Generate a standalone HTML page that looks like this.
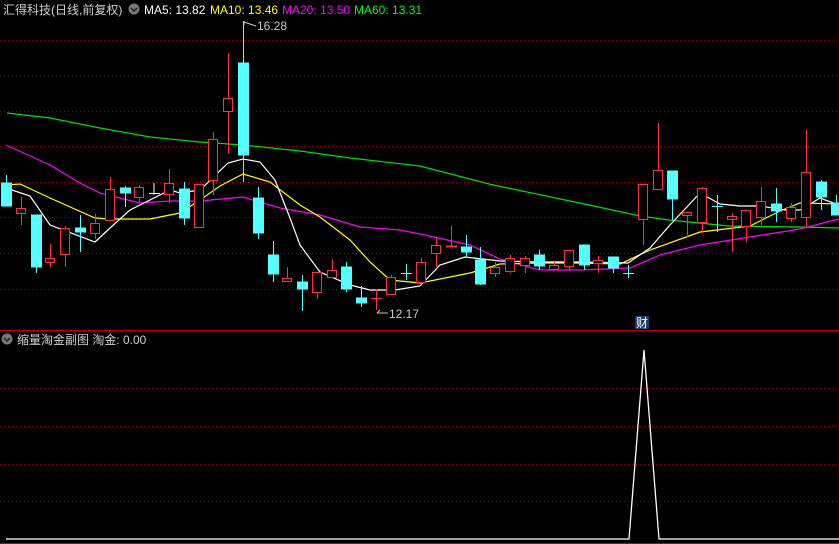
<!DOCTYPE html>
<html><head><meta charset="utf-8"><style>
html,body{margin:0;padding:0;background:#000;width:839px;height:544px;overflow:hidden}
svg{display:block}
text{font-family:"Liberation Sans","Noto Sans CJK SC",sans-serif;font-size:12px}
</style></head><body>
<svg width="839" height="544" viewBox="0 0 839 544" xmlns="http://www.w3.org/2000/svg">
<rect width="839" height="544" fill="#000"/>
<g stroke="#a00000" stroke-width="1" stroke-dasharray="1,3">
<line x1="0" y1="40.5" x2="839" y2="40.5"/><line x1="0" y1="75.5" x2="839" y2="75.5"/>
<line x1="0" y1="111.5" x2="839" y2="111.5"/><line x1="0" y1="146.5" x2="839" y2="146.5"/>
<line x1="0" y1="182.5" x2="839" y2="182.5"/><line x1="0" y1="217.5" x2="839" y2="217.5"/>
<line x1="0" y1="253.5" x2="839" y2="253.5"/><line x1="0" y1="289.5" x2="839" y2="289.5"/>
<line x1="0" y1="388.5" x2="839" y2="388.5"/><line x1="0" y1="426.5" x2="839" y2="426.5"/>
<line x1="0" y1="464.5" x2="839" y2="464.5"/><line x1="0" y1="501.5" x2="839" y2="501.5"/>
</g>
<line x1="0" y1="330.5" x2="839" y2="330.5" stroke="#c00000"/>
<line x1="0" y1="543.5" x2="839" y2="543.5" stroke="#c00000"/>
<!-- MAs -->
<g fill="none" stroke-width="1.2">
<polyline stroke="#00e000" points="7,113 50,118 100,128 150,137 200,142 243,145 300,151 350,158 420,166 489,184 589,205 640,216 669,220 729,226 799,227 839,228"/>
<polyline stroke="#ff00ff" points="6,145 50,165 80,183 100,193 140,203 170,201 200,201 243,197 280,208 320,215 360,227 400,230 420,234 470,245 500,259 540,270 580,270 630,268 660,255 700,245 750,237 800,229 839,219"/>
<polyline stroke="#ffff00" points="6,185 20,184 50,198 95,218 110,219 150,219 180,213 200,200 220,186 243,174 270,182 300,205 320,217 350,240 370,262 390,280 420,283 470,273 500,264 540,263 580,263 620,264 650,250 700,232 750,226 780,211 800,203 839,204"/>
<polyline stroke="#ffffff" points="6,188 30,196 50,225 95,242 110,228 130,210 170,190 180,193 200,190 228,163 243,159 260,162 275,180 290,218 300,245 320,272 350,285 370,290 395,290 420,286 440,265 465,257 500,261 540,262 580,262 628,263 650,248 670,225 700,193 720,204 740,206 760,206 785,210 800,210 820,198 839,205"/>
</g>
<!-- cyan candles -->
<g stroke="#54ffff" fill="#54ffff">
<line x1="6.5" y1="175" x2="6.5" y2="206"/><rect x="1.5" y="183" width="10" height="23"/>
<line x1="36.5" y1="215" x2="36.5" y2="273"/><rect x="31.5" y="215" width="10" height="52"/>
<line x1="80.5" y1="215" x2="80.5" y2="252"/><rect x="75.5" y="228" width="10" height="4"/>
<line x1="125.5" y1="186" x2="125.5" y2="207"/><rect x="120.5" y="188" width="10" height="5"/>
<line x1="184.5" y1="182" x2="184.5" y2="225"/><rect x="179.5" y="189" width="10" height="29"/>
<line x1="243.5" y1="21" x2="243.5" y2="182"/><rect x="238.5" y="63" width="10" height="92"/>
<line x1="258.5" y1="187" x2="258.5" y2="239"/><rect x="253.5" y="198" width="10" height="35"/>
<line x1="273.5" y1="241" x2="273.5" y2="282"/><rect x="268.5" y="255" width="10" height="19"/>
<line x1="302.5" y1="275" x2="302.5" y2="311"/><rect x="297.5" y="282" width="10" height="7"/>
<line x1="346.5" y1="262" x2="346.5" y2="292"/><rect x="341.5" y="267" width="10" height="22"/>
<line x1="361.5" y1="286" x2="361.5" y2="307"/><rect x="356.5" y="298" width="10" height="5"/>
<line x1="406.5" y1="264" x2="406.5" y2="280"/><line x1="401" y1="273.5" x2="412" y2="273.5"/>
<line x1="466.5" y1="235" x2="466.5" y2="257"/><rect x="461.5" y="247" width="10" height="5"/>
<line x1="480.5" y1="247" x2="480.5" y2="285"/><rect x="475.5" y="260" width="10" height="24"/>
<line x1="539.5" y1="250" x2="539.5" y2="270"/><rect x="534.5" y="255" width="10" height="11"/>
<line x1="584.5" y1="245" x2="584.5" y2="270"/><rect x="579.5" y="245" width="10" height="20"/>
<line x1="613.5" y1="257" x2="613.5" y2="273"/><rect x="608.5" y="257" width="10" height="11"/>
<line x1="628.5" y1="265" x2="628.5" y2="278"/><line x1="623" y1="273.5" x2="634" y2="273.5"/>
<line x1="672.5" y1="171" x2="672.5" y2="220"/><rect x="667.5" y="171" width="10" height="28"/>
<line x1="717.5" y1="195" x2="717.5" y2="232"/><line x1="712" y1="206.5" x2="723" y2="206.5"/>
<line x1="776.5" y1="188" x2="776.5" y2="222"/><rect x="771.5" y="204" width="10" height="7"/>
<line x1="821.5" y1="180" x2="821.5" y2="210"/><rect x="816.5" y="182" width="10" height="15"/>
<line x1="836.5" y1="195" x2="836.5" y2="215"/><rect x="831.5" y="203" width="10" height="12"/>
</g>
<!-- red candles -->
<g stroke="#ff3333" fill="#000">
<line x1="21.5" y1="197" x2="21.5" y2="225"/><rect x="16.5" y="208.5" width="9" height="5"/>
<line x1="50.5" y1="244" x2="50.5" y2="267"/><rect x="45.5" y="258.5" width="9" height="4"/>
<line x1="65.5" y1="226" x2="65.5" y2="267"/><rect x="60.5" y="228.5" width="9" height="26"/>
<line x1="95.5" y1="214" x2="95.5" y2="239"/><rect x="90.5" y="223.5" width="9" height="10"/>
<line x1="110.5" y1="177" x2="110.5" y2="221"/><rect x="105.5" y="189.5" width="9" height="31"/>
<line x1="139.5" y1="185" x2="139.5" y2="202"/><rect x="134.5" y="187.5" width="9" height="10"/>
<line x1="169.5" y1="169" x2="169.5" y2="203"/><rect x="164.5" y="183.5" width="9" height="11"/>
<line x1="199.5" y1="184" x2="199.5" y2="228"/><rect x="194.5" y="184.5" width="9" height="43"/>
<line x1="213.5" y1="132" x2="213.5" y2="195"/><rect x="208.5" y="139.5" width="9" height="41"/>
<line x1="228.5" y1="53" x2="228.5" y2="154"/><rect x="223.5" y="98.5" width="9" height="13"/>
<line x1="287.5" y1="267" x2="287.5" y2="281"/><rect x="282.5" y="278.5" width="9" height="3"/>
<line x1="317.5" y1="272" x2="317.5" y2="299"/><rect x="312.5" y="272.5" width="9" height="20"/>
<line x1="332.5" y1="259" x2="332.5" y2="278"/><rect x="327.5" y="270.5" width="9" height="7"/>
<line x1="376.5" y1="289" x2="376.5" y2="310"/><line x1="371" y1="298.5" x2="382" y2="298.5"/>
<line x1="391.5" y1="275" x2="391.5" y2="294"/><rect x="386.5" y="277.5" width="9" height="17"/>
<line x1="421.5" y1="258" x2="421.5" y2="282"/><rect x="416.5" y="262.5" width="9" height="20"/>
<line x1="436.5" y1="238" x2="436.5" y2="267"/><rect x="431.5" y="245.5" width="9" height="8"/>
<line x1="451.5" y1="226" x2="451.5" y2="247"/><line x1="446" y1="246.5" x2="457" y2="246.5" stroke-width="2"/>
<line x1="495.5" y1="262" x2="495.5" y2="277"/><rect x="490.5" y="267.5" width="9" height="6"/>
<line x1="510.5" y1="255" x2="510.5" y2="273"/><rect x="505.5" y="258.5" width="9" height="13"/>
<line x1="525.5" y1="256" x2="525.5" y2="273"/><rect x="520.5" y="258.5" width="9" height="7"/>
<line x1="554.5" y1="262" x2="554.5" y2="270"/><rect x="549.5" y="265.5" width="9" height="4"/>
<line x1="569.5" y1="250" x2="569.5" y2="270"/><rect x="564.5" y="250.5" width="9" height="16"/>
<line x1="598.5" y1="256" x2="598.5" y2="273"/><rect x="593.5" y="260.5" width="9" height="3"/>
<line x1="643.5" y1="184" x2="643.5" y2="245"/><rect x="638.5" y="184.5" width="9" height="35"/>
<line x1="658.5" y1="123" x2="658.5" y2="189"/><rect x="653.5" y="170.5" width="9" height="19"/>
<line x1="687.5" y1="212" x2="687.5" y2="237"/><rect x="682.5" y="212.5" width="9" height="3"/>
<line x1="702.5" y1="187" x2="702.5" y2="233"/><rect x="697.5" y="188.5" width="9" height="34"/>
<line x1="732.5" y1="213" x2="732.5" y2="252"/><rect x="727.5" y="216.5" width="9" height="3"/>
<line x1="746.5" y1="210" x2="746.5" y2="242"/><rect x="741.5" y="210.5" width="9" height="16"/>
<line x1="761.5" y1="187" x2="761.5" y2="225"/><rect x="756.5" y="201.5" width="9" height="16"/>
<line x1="791.5" y1="203" x2="791.5" y2="222"/><rect x="786.5" y="207.5" width="9" height="11"/>
<line x1="806.5" y1="130" x2="806.5" y2="227"/><rect x="801.5" y="172.5" width="9" height="45"/>
</g>
<line x1="154" y1="183" x2="154" y2="195" stroke="#fff"/><line x1="149" y1="193.5" x2="160" y2="193.5" stroke="#fff"/>
<!-- labels -->
<text x="257" y="30" fill="#c8c8c8">16.28</text>
<path d="M244 21 L244 25 M244 22 L256 26" stroke="#c8c8c8" fill="none"/>
<text x="389" y="318" fill="#c8c8c8">12.17</text>
<path d="M377 313 L388 313 M377 313 L380 310" stroke="#c8c8c8" fill="none"/>
<rect x="635" y="316" width="14" height="13" fill="#1a3d6e"/>
<text x="636" y="327" fill="#fff" font-size="11">财</text>
<!-- header -->
<text x="3" y="14" fill="#d0d0d0">汇得科技(日线,前复权)</text>
<circle cx="134" cy="9" r="5.5" fill="#777"/><path d="M131 8 L134 11 L137 8" stroke="#222" stroke-width="1.5" fill="none"/>
<text x="144" y="14" fill="#fff">MA5: 13.82</text>
<text x="210" y="14" fill="#ffff00">MA10: 13.46</text>
<text x="282" y="14" fill="#ff00ff">MA20: 13.50</text>
<text x="354" y="14" fill="#00ff00">MA60: 13.31</text>
<circle cx="7" cy="339" r="5.5" fill="#777"/><path d="M4 338 L7 341 L10 338" stroke="#222" stroke-width="1.5" fill="none"/>
<text x="17" y="344" fill="#d0d0d0">缩量淘金副图 淘金: 0.00</text>
<!-- lower indicator -->
<polyline fill="none" stroke="#fff" stroke-width="1.3" points="6,539 629,539 644,350 659,539 839,539"/>
</svg>
</body></html>
